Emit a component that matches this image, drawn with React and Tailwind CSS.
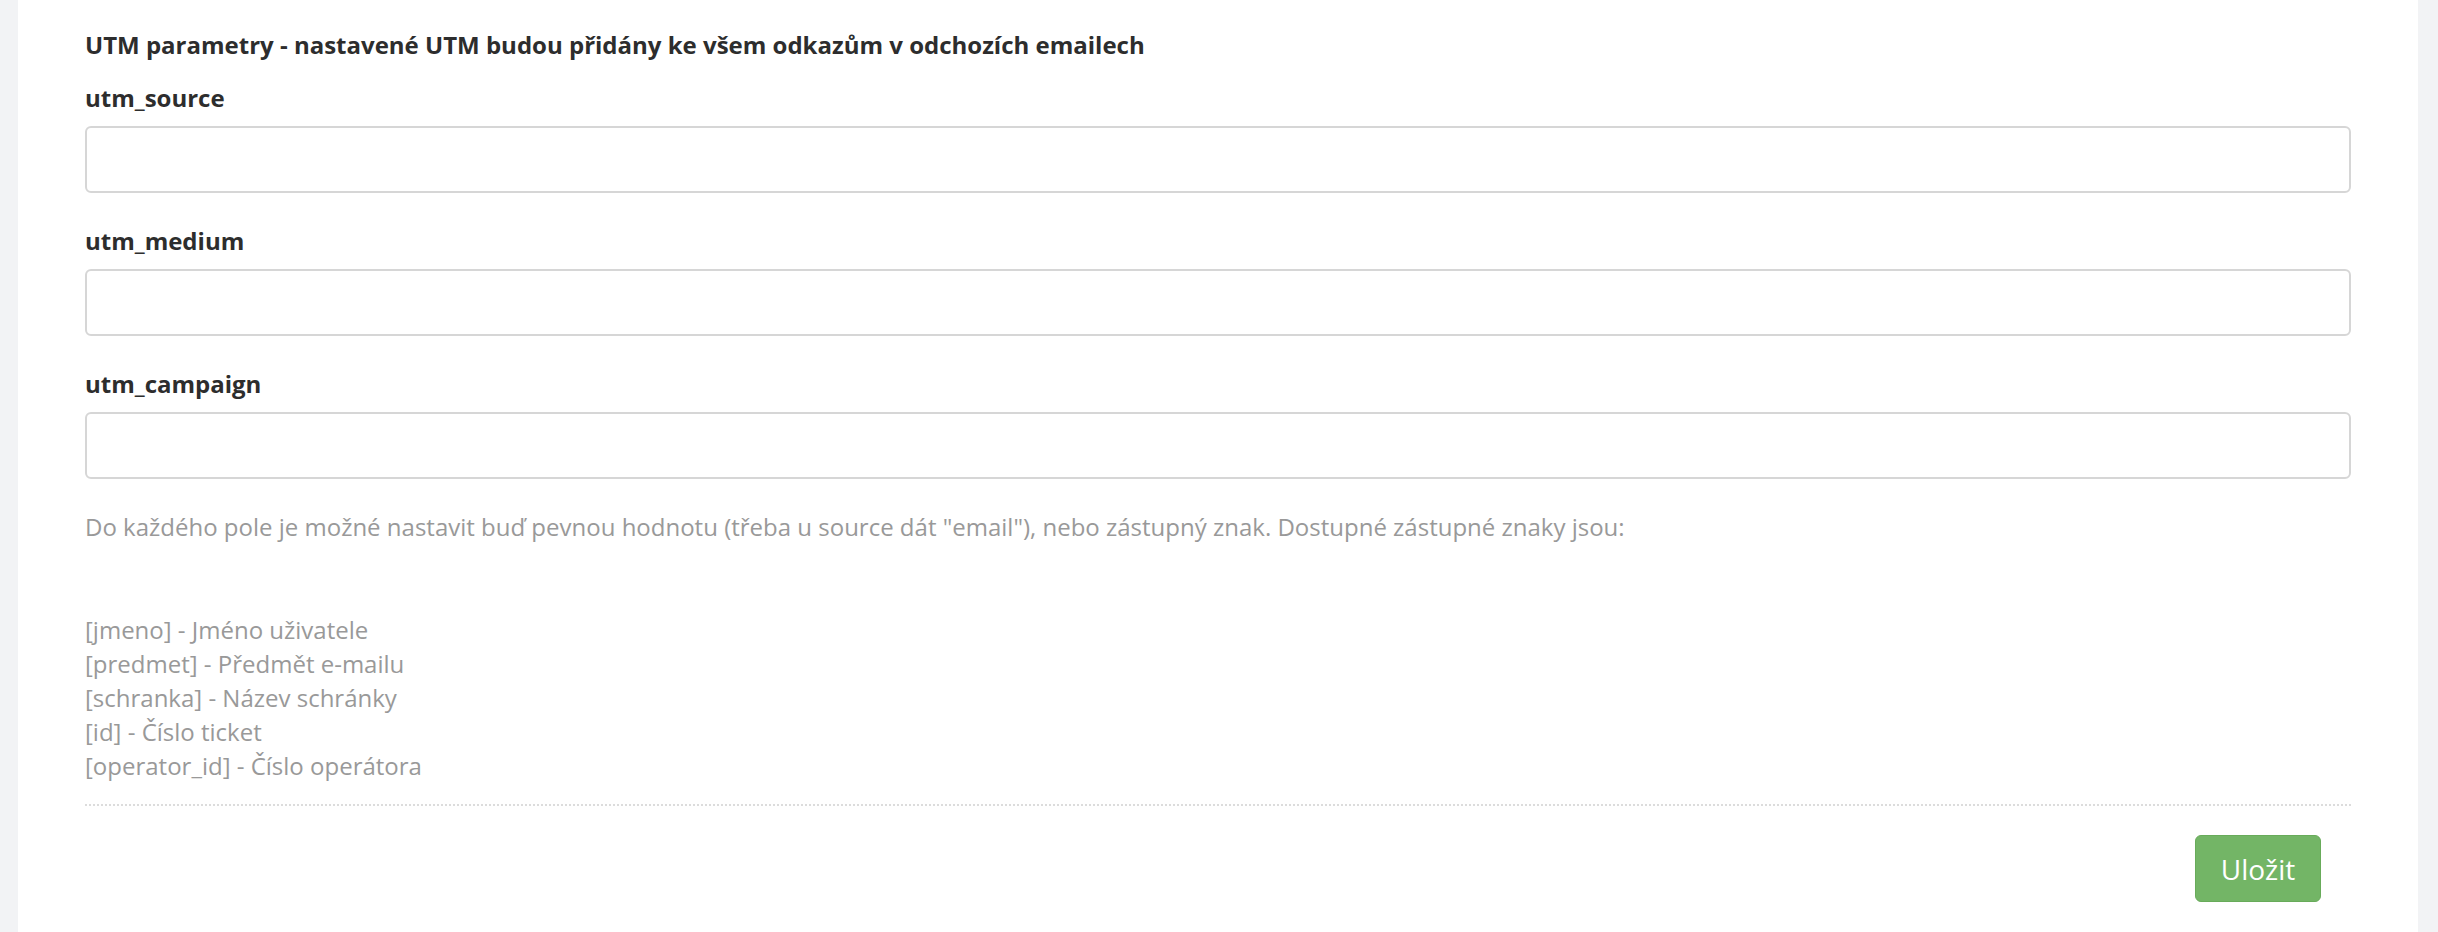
import React from 'react'

const fields = ['utm_source', 'utm_medium', 'utm_campaign']

const placeholders = [
  '[jmeno] - Jméno uživatele',
  '[predmet] - Předmět e-mailu',
  '[schranka] - Název schránky',
  '[id] - Číslo ticket',
  '[operator_id] - Číslo operátora'
]

const App = () => {
  return (
    <div className="min-h-[932px] bg-[#f2f3f5] flex font-['Open_Sans',sans-serif] text-[24px] leading-[34px]">
      <div className="ml-[18px] w-[2400px] bg-white px-[67px] pt-[28px] pb-[30px]">
        <h4 className="font-bold text-[#2d2d2d] mb-[19px]">
          UTM parametry - nastavené UTM budou přidány ke všem odkazům v odchozích emailech
        </h4>

        {fields.map((name) => (
          <div key={name} className="mb-[31px]">
            <label className="block font-bold text-[#2d2d2d] mb-[11px]">{name}</label>
            <input
              type="text"
              className="block w-full h-[67px] border-2 border-[#d6d6d6] rounded-[6px] px-4 outline-none"
            />
          </div>
        ))}

        <p className="text-[#999999] mb-[69px]">
          Do každého pole je možné nastavit buď pevnou hodnotu (třeba u source dát "email"), nebo zástupný znak. Dostupné zástupné znaky jsou:
        </p>

        <div className="text-[#999999]">
          {placeholders.map((line) => (
            <div key={line}>{line}</div>
          ))}
        </div>

        <div className="mt-[21px] border-t-2 border-dotted border-[#dcdcdc]" />

        <div className="flex justify-end pt-[29px] pr-[30px]">
          <button className="w-[126px] h-[67px] rounded-[6px] bg-[#73b566] border border-[#68ab5a] text-white text-[28px] leading-none">
            Uložit
          </button>
        </div>
      </div>
    </div>
  )
}

export default App
